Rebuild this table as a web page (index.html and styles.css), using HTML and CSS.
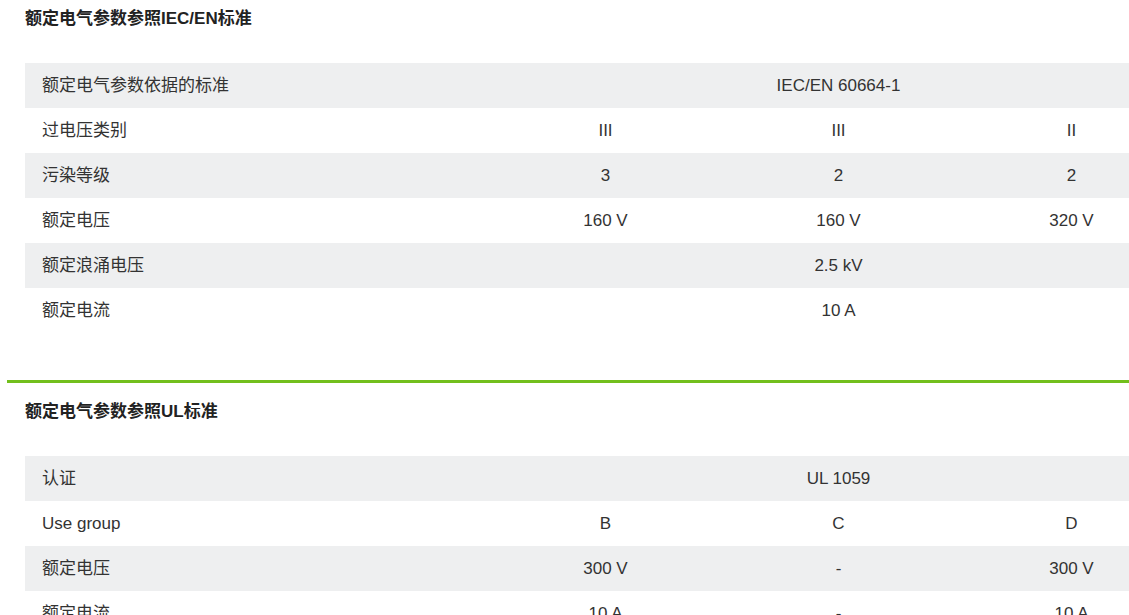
FILE: index.html
```html
<!DOCTYPE html>
<html>
<head>
  <title>额定电气参数</title>
  <link rel="stylesheet" href="styles.css">
</head>
<body>
  <div class="page">
    <div class="section">
      <h2 class="section-title">额定电气参数参照IEC/EN标准</h2>
      <table class="spec-table">
        <colgroup>
          <col class="col-label">
          <col class="col-value">
          <col class="col-value">
          <col class="col-value">
        </colgroup>
        <tr><td>额定电气参数依据的标准</td><td colspan="3">IEC/EN 60664-1</td></tr>
        <tr><td>过电压类别</td><td>III</td><td>III</td><td>II</td></tr>
        <tr><td>污染等级</td><td>3</td><td>2</td><td>2</td></tr>
        <tr><td>额定电压</td><td>160 V</td><td>160 V</td><td>320 V</td></tr>
        <tr><td>额定浪涌电压</td><td colspan="3">2.5 kV</td></tr>
        <tr><td>额定电流</td><td colspan="3">10 A</td></tr>
      </table>
    </div>

    <div class="section section-green">
      <h2 class="section-title">额定电气参数参照UL标准</h2>
      <table class="spec-table">
        <colgroup>
          <col class="col-label">
          <col class="col-value">
          <col class="col-value">
          <col class="col-value">
        </colgroup>
        <tr><td>认证</td><td colspan="3">UL 1059</td></tr>
        <tr><td>Use group</td><td>B</td><td>C</td><td>D</td></tr>
        <tr><td>额定电压</td><td>300 V</td><td>-</td><td>300 V</td></tr>
        <tr><td>额定电流</td><td>10 A</td><td>-</td><td>10 A</td></tr>
      </table>
    </div>
  </div>
</body>
</html>
```

FILE: styles.css
```css
body {
  margin: 0;
  background-color: #fff;
  color: #333;
  font-family: "Liberation Sans", Arial, "Noto Sans CJK SC", sans-serif;
  overflow: hidden;
}

.page {
  padding-left: 7px;
}

.section {
  padding: 0 0 47px 18px;
}

.section-green {
  border-top: 3px solid #72bf1c;
}

.section-title {
  font-size: 17px;
  font-weight: bold;
  line-height: 24px;
  color: #222;
  margin: 7px 0 32px;
}

.section-green .section-title {
  margin-top: 17px;
}

.spec-table {
  width: 1163px;
  table-layout: fixed;
  border-collapse: collapse;
  font-size: 17px;
  line-height: 20px;
}

.col-label {
  width: 464px;
}

.col-value {
  width: 233px;
}

.spec-table tr {
  height: 45px;
}

.spec-table td {
  padding: 0;
  text-align: center;
  vertical-align: middle;
}

.spec-table td:first-child {
  text-align: left;
  padding-left: 17px;
}

.spec-table tr:nth-child(odd) {
  background-color: #eeeff0;
}
```
